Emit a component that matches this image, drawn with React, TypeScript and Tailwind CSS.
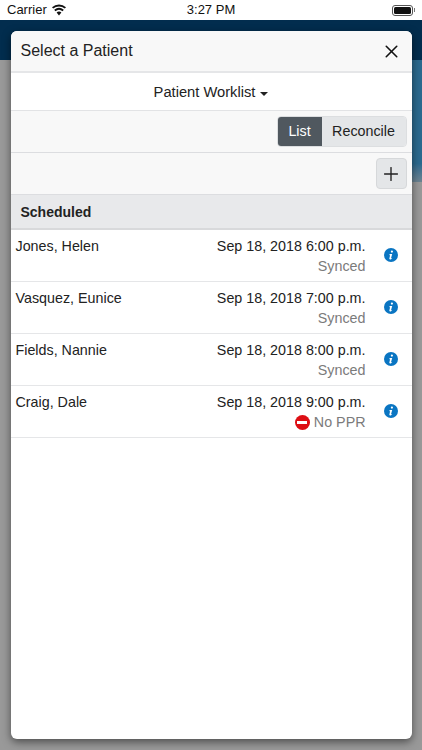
import { Plus, X } from 'lucide-react';

const patients = [
  { name: 'Jones, Helen', date: 'Sep 18, 2018 6:00 p.m.', status: 'Synced' },
  { name: 'Vasquez, Eunice', date: 'Sep 18, 2018 7:00 p.m.', status: 'Synced' },
  { name: 'Fields, Nannie', date: 'Sep 18, 2018 8:00 p.m.', status: 'Synced' },
  { name: 'Craig, Dale', date: 'Sep 18, 2018 9:00 p.m.', status: 'No PPR', blocked: true },
];

function InfoIcon() {
  return (
    <svg viewBox="0 0 14 14" className="h-[14px] w-[14px]">
      <circle cx="7" cy="7" r="7" fill="#0a75c2" />
      <circle cx="7.9" cy="3.6" r="1.1" fill="#fff" />
      <path d="M5.6 6h2.6l-1.1 4.1c-.1.3.2.4.9-.2l.2.3c-.8.9-1.5 1.2-2.1 1.2-.7 0-.9-.5-.7-1.2l.7-2.9-.7-.1z" fill="#fff" />
    </svg>
  );
}

export default function App() {
  return (
    <div className="relative flex h-[750px] w-[422px] flex-col overflow-hidden bg-[#999999] font-['Helvetica','Liberation_Sans',sans-serif]">
      {/* status bar */}
      <div className="flex h-[20px] shrink-0 items-center bg-white pl-[7px] pr-[7px] text-[13px] text-[#111]">
        <div className="flex flex-1 items-center gap-[4px]">
          <span>Carrier</span>
          <svg viewBox="0 0 16 12" className="h-[12px] w-[16px]">
            <path d="M8 11.5 5.6 8.6a3.6 3.6 0 0 1 4.8 0z" fill="#111" />
            <path d="M4.4 7.2a5.6 5.6 0 0 1 7.2 0l1.2-1.4a7.6 7.6 0 0 0-9.6 0z" fill="#111" />
            <path d="M2.2 4.6a9 9 0 0 1 11.6 0L15 3.2a10.8 10.8 0 0 0-14 0z" fill="#111" />
          </svg>
        </div>
        <span className="font-medium">3:27 PM</span>
        <div className="flex flex-1 items-center justify-end">
          <div className="h-[11px] w-[21px] rounded-[3px] border border-[#555] p-[1px]">
            <div className="h-full w-full rounded-[1.5px] bg-[#111]" />
          </div>
          <div className="ml-[1px] h-[4px] w-[1px] bg-[#777]" />
        </div>
      </div>

      {/* app header behind the dialog */}
      <div className="h-[40px] shrink-0 bg-[#022d4e]" />
      <div className="flex h-[122px] shrink-0 justify-end">
        <div className="w-[10px] bg-gradient-to-b from-[#2b6a8f] from-85% to-[#6d8492]" />
      </div>

      <div className="absolute inset-x-[10.5px] bottom-[11px] top-[31px] flex flex-col overflow-hidden rounded-[6px] bg-white shadow-[0_3px_9px_rgba(0,0,0,0.5)]">
        <div className="flex h-[42px] shrink-0 items-center justify-between border-b-2 border-[#e5e6e8] bg-[#f8f8f8] pl-[10px] pr-[10px]">
          <span className="text-[16px] text-[#222]">Select a Patient</span>
          <X className="h-[21px] w-[21px] text-[#111]" strokeWidth={1.8} />
        </div>

        <div className="flex h-[38px] shrink-0 items-center justify-center gap-[5px] border-b border-[#e2e3e5] pt-[2px] text-[14.7px] text-[#222]">
          <span>Patient Worklist</span>
          <span className="mt-[2px] h-0 w-0 border-x-[4px] border-t-[4px] border-x-transparent border-t-[#222]" />
        </div>

        <div className="flex h-[42px] shrink-0 items-center justify-end border-b border-[#dcdde0] bg-[#f8f8f8] pr-[5px]">
          <div className="flex h-[31px] overflow-hidden rounded-[4px] border border-[#dcdee0] text-[14.3px]">
            <div className="flex w-[44px] items-center justify-center bg-[#50585f] text-white">List</div>
            <div className="flex w-[84px] items-center justify-center bg-[#e4e6e8] text-[#222]">Reconcile</div>
          </div>
        </div>

        <div className="flex h-[42px] shrink-0 items-center justify-end border-b border-[#dcdde0] bg-[#f8f8f8] pr-[5px]">
          <div className="flex h-[31px] w-[31px] items-center justify-center rounded-[4px] border border-[#d6d8da] bg-[#e4e6e8]">
            <Plus className="h-[22px] w-[22px] text-[#222]" strokeWidth={1.5} />
          </div>
        </div>

        <div className="flex h-[35px] shrink-0 items-center border-b-2 border-[#d8d9db] bg-[#e8e9eb] pl-[10px] pt-[2px] text-[14px] font-bold text-[#222]">
          Scheduled
        </div>

        {patients.map((patient) => (
          <div key={patient.name} className="flex h-[52px] shrink-0 border-b border-[#e5e6e8] pl-[5px] pr-[14px] pt-[7px] text-[14.3px] text-[#222]">
            <div className="flex-1 leading-[18px]">{patient.name}</div>
            <div className="flex flex-col items-end leading-[18px]">
              <span>{patient.date}</span>
              <span className="mt-[2px] flex items-center gap-[4px] text-[#7b7b7b]">
                {patient.blocked && (
                  <span className="flex h-[15px] w-[15px] items-center justify-center rounded-full bg-[#dd0f14]">
                    <span className="h-[3px] w-[10px] bg-white" />
                  </span>
                )}
                {patient.status}
              </span>
            </div>
            <div className="ml-[18px] flex items-center pb-[9px]">
              <InfoIcon />
            </div>
          </div>
        ))}
      </div>
    </div>
  );
}
